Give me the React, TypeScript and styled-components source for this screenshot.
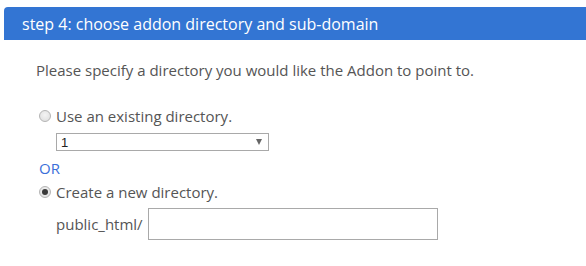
import React from "react";
import styled, { createGlobalStyle } from "styled-components";

const Global = createGlobalStyle`
  html, body { margin: 0; padding: 0; background: #fff; }
  body { font-family: "Segoe UI", "Open Sans", "Noto Sans", sans-serif; }
`;

const Page = styled.div`
  width: 586px;
  height: 266px;
  overflow: hidden;
  padding-top: 7px;
  box-sizing: border-box;
`;

const Header = styled.div`
  margin-left: 4px;
  height: 33px;
  background: #3375d3;
  border-radius: 4px 0 0 0;
  color: #fff;
  font-size: 16px;
  display: flex;
  align-items: center;
  padding-left: 18px;
  box-sizing: border-box;
`;

const Body = styled.div`
  padding-left: 36px;
  color: #555;
  font-size: 15px;
`;

const Intro = styled.p`
  margin: 19px 0 0 0;
  line-height: 22px;
`;

const OptionRow = styled.label<{ $top: number }>`
  display: flex;
  align-items: center;
  gap: 5px;
  margin-left: 3px;
  margin-top: ${(p) => p.$top}px;
  height: 22px;
`;

const Radio = styled.span<{ $checked?: boolean }>`
  width: 12px;
  height: 12px;
  border-radius: 50%;
  box-sizing: border-box;
  border: 1px solid #b4b4b4;
  background: radial-gradient(circle at 50% 40%, #f4f4f4 0%, #dcdcdc 100%);
  display: flex;
  align-items: center;
  justify-content: center;
  &::after {
    content: "";
    display: ${(p) => (p.$checked ? "block" : "none")};
    width: 6px;
    height: 6px;
    border-radius: 50%;
    background: #3a3a3a;
  }
`;

const Select = styled.div`
  margin: 6px 0 0 20px;
  width: 213px;
  height: 18px;
  box-sizing: border-box;
  border: 1px solid #a9a9a9;
  display: flex;
  align-items: center;
  justify-content: space-between;
  padding: 0 6px 0 4px;
  font-family: "Liberation Sans", Arial, sans-serif;
  font-size: 13px;
  color: #222;
`;

const Arrow = styled.span`
  width: 0;
  height: 0;
  border-left: 3.5px solid transparent;
  border-right: 3.5px solid transparent;
  border-top: 6px solid #666;
`;

const Or = styled.div`
  margin: 6px 0 0 3px;
  color: #3b6fd9;
  line-height: 22px;
`;

const PathRow = styled.div`
  display: flex;
  align-items: center;
  gap: 5px;
  margin: 5px 0 0 20px;
`;

const TextInput = styled.input`
  width: 290px;
  height: 32px;
  box-sizing: border-box;
  border: 1px solid #a9a9a9;
  outline: none;
  padding: 0 4px;
  font-size: 15px;
`;

export default function App() {
  return (
    <>
      <Global />
      <Page>
        <Header>step 4: choose addon directory and sub-domain</Header>
        <Body>
          <Intro>Please specify a directory you would like the Addon to point to.</Intro>
          <OptionRow $top={24}>
            <Radio />
            Use an existing directory.
          </OptionRow>
          <Select>
            <span>1</span>
            <Arrow />
          </Select>
          <Or>OR</Or>
          <OptionRow $top={2}>
            <Radio $checked />
            Create a new directory.
          </OptionRow>
          <PathRow>
            <span>public_html/</span>
            <TextInput />
          </PathRow>
        </Body>
      </Page>
    </>
  );
}
